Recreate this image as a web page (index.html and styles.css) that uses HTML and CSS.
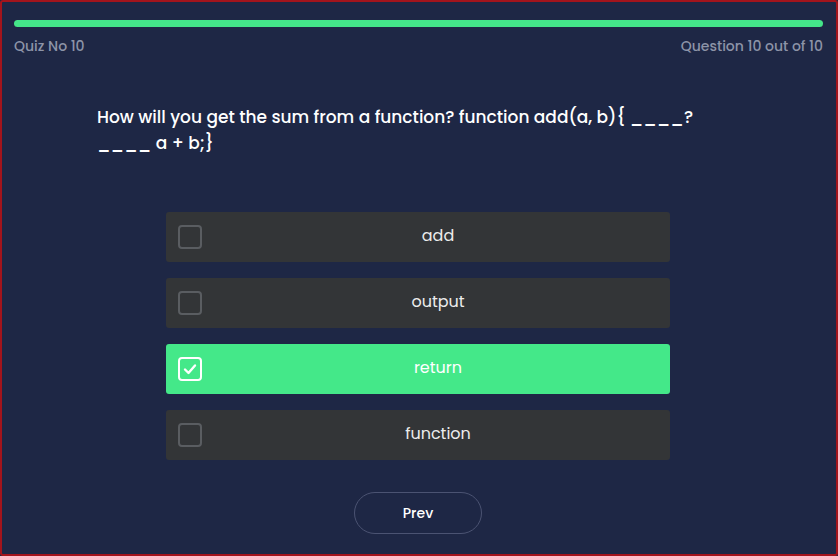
FILE: index.html
```html
<!DOCTYPE html>
<html>
<head>
<meta charset="utf-8">
<link rel="stylesheet" href="styles.css">
</head>
<body>
<div class="frame">
  <div class="quiz">
    <div class="progress"><div class="progress-fill"></div></div>
    <div class="meta">
      <span>Quiz No 10</span>
      <span>Question 10 out of 10</span>
    </div>
    <div class="question">How will you get the sum from a function? function add(a, b){ ____? ____ a + b;}</div>
    <div class="options">
      <div class="option"><span class="box"></span><span class="label">add</span></div>
      <div class="option"><span class="box"></span><span class="label">output</span></div>
      <div class="option selected"><span class="box"><svg width="14" height="12" viewBox="0 0 14 12"><path d="M2 6.5 L5.5 10 L12 2.5" fill="none" stroke="#fff" stroke-width="2.4" stroke-linecap="round" stroke-linejoin="round"/></svg></span><span class="label">return</span></div>
      <div class="option"><span class="box"></span><span class="label">function</span></div>
    </div>
    <div class="nav">
      <button class="prev">Prev</button>
    </div>
  </div>
</div>
</body>
</html>
```
FILE: styles.css
```css
html, body {
  margin: 0;
  padding: 0;
  height: 100%;
  background: #1f2744;
}
.frame {
  box-sizing: border-box;
  height: 556px;
  width: 838px;
  border: 2px solid #a3141c;
  border-radius: 3px;
  background: #1e2745;
  font-family: "Poppins", "Inter", "Noto Sans", sans-serif;
}
.quiz {
  padding: 18px 14px 0 12px;
}
.progress {
  height: 7px;
  border-radius: 4px;
  background: #223;
  margin-right: -1px;
}
.progress-fill {
  height: 100%;
  width: 100%;
  border-radius: 4px;
  background: #44e589;
}
.meta {
  display: flex;
  justify-content: space-between;
  margin-top: 10px;
  margin-right: -1px;
  font-size: 14px;
  font-weight: 500;
  line-height: 18px;
  color: #8d94a8;
}
.question {
  margin: 49px 0 0 83px;
  width: 610px;
  font-size: 17px;
  font-weight: 500;
  line-height: 26px;
  color: #ffffff;
}
.options {
  width: 504px;
  margin: 56px auto 0 auto;
  display: flex;
  flex-direction: column;
  gap: 16px;
}
.option {
  height: 50px;
  display: flex;
  align-items: center;
  background: #333537;
  border-radius: 3px;
}
.option .box {
  box-sizing: border-box;
  width: 24px;
  height: 24px;
  margin-left: 12px;
  border: 2px solid #5a5d61;
  border-radius: 4px;
  display: flex;
  align-items: center;
  justify-content: center;
}
.option .label {
  flex: 1;
  text-align: center;
  font-size: 16px;
  line-height: 20px;
  color: #ececec;
  padding-left: 4px;
  margin-bottom: 2px;
}
.option.selected {
  background: #44e889;
}
.option.selected .box {
  border-color: #ffffff;
}
.option.selected .label {
  color: #ffffff;
}
.nav {
  display: flex;
  justify-content: center;
  margin-top: 32px;
}
.prev {
  width: 128px;
  height: 42px;
  border-radius: 21px;
  border: 1px solid #4b5372;
  background: transparent;
  color: #ffffff;
  font-family: "Poppins", "Inter", "Noto Sans", sans-serif;
  font-size: 14px;
  font-weight: 500;
}
```
